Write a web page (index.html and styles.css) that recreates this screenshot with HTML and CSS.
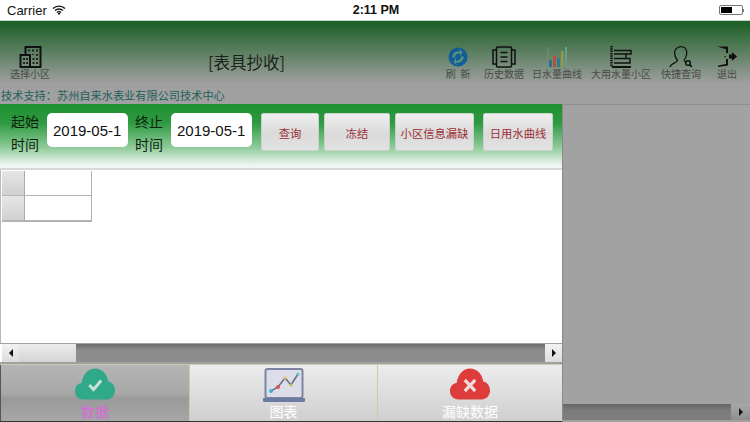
FILE: index.html
```html
<!DOCTYPE html>
<html lang="zh">
<head>
<meta charset="utf-8">
<title>表具抄收</title>
<link rel="stylesheet" href="styles.css">
</head>
<body>
<div class="status">
  <div class="st-left"><span>Carrier</span>
    <svg class="wifi" width="14" height="10" viewBox="0 0 14 10"><path d="M1 3.600a8.600 8.600 0 0 1 12 0M3 5.600a5.700 5.700 0 0 1 8 0M5 7.500a2.800 2.800 0 0 1 4 0" fill="none" stroke="#111" stroke-width="1.400"/><path d="M7 10 5.600 8.400a2 2 0 0 1 2.800 0z" fill="#111"/></svg>
  </div>
  <div class="st-time">2:11 PM</div>
  <div class="st-right"><div class="batt"><div class="batt-fill"></div></div><div class="batt-tip"></div></div>
</div>
<header class="header">
  <div class="hd-item hd-first">
    <svg class="ico" width="24" height="22" viewBox="0 0 24 22"><path d="M7.500 9V1h15v20H2.500V9H12v12" fill="none" stroke="#111" stroke-width="2"/><path d="M10 3.500h2v2h-2zM14 3.500h2v2h-2zM18 3.500h2v2h-2zM18 8h2v2h-2zM14 8l2 0v1h-2zM5 12h2v2H5zM8 12h2v2H8zM5 16h2v2H5zM8 16h2v2H8zM14.500 12h2v2h-2zM18 12h2v2h-2zM14.500 16h2v2h-2zM18 16h2v2h-2z" fill="#222"/></svg>
    <span>选择小区</span>
  </div>
  <div class="hd-title">[表具抄收]</div>
  <div class="hd-actions">
    <div class="hd-item a1">
      <svg class="ico" width="24" height="22" viewBox="0 0 24 22"><circle cx="12" cy="11" r="9.500" fill="#0f5f96"/><path d="M6.500 12a6 6 0 0 1 8-6.500l-1.500-3 3.500 3.500-2.500 4.500v-3a4 4 0 0 0-5 3.500zM17.500 10a6 6 0 0 1-8 6.500l1.500 3L7.500 16l2.500-4.500v3a4 4 0 0 0 5-3.500z" fill="#5f8f80"/></svg>
      <span>刷&nbsp;&nbsp;新</span>
    </div>
    <div class="hd-item a2">
      <svg class="ico" width="24" height="22" viewBox="0 0 24 22"><rect x="4.500" y="1" width="15" height="20" rx="1" fill="none" stroke="#111" stroke-width="1.500"/><path d="M4.500 4H1v14h3.500M19.500 4H23v14h-3.500M8.500 6.500h7M8.500 11h7M8.500 15.500h7" fill="none" stroke="#111" stroke-width="1.500"/></svg>
      <span>历史数据</span>
    </div>
    <div class="hd-item a3">
      <svg class="ico" width="24" height="22" viewBox="0 0 24 22"><path d="M3 1v20M3 21h19" stroke="#6f8f7f" stroke-width="1"/><rect x="4" y="14" width="3" height="7" fill="#2c6f92"/><rect x="8" y="10" width="3" height="11" fill="#b5513c"/><rect x="12" y="12" width="3" height="9" fill="#2f7a8f"/><rect x="16" y="5" width="2.500" height="16" fill="#8f9a4a"/><rect x="20" y="1" width="2" height="20" fill="#5f9f8f"/></svg>
      <span>日水量曲线</span>
    </div>
    <div class="hd-item a4">
      <svg class="ico" width="24" height="22" viewBox="0 0 24 22"><path d="M2.500 0v21" stroke="#111" stroke-width="2.400" stroke-dasharray="1.500 .8"/><path d="M3 21h19" stroke="#111" stroke-width="2"/><path d="M5 4.500h17V8H5M5 8h12v4.500H5M5 12.500h16V17H5" fill="none" stroke="#111" stroke-width="1.400"/></svg>
      <span>大用水量小区</span>
    </div>
    <div class="hd-item a5">
      <svg class="ico" width="24" height="22" viewBox="0 0 24 22"><path d="M1 21c1-4 6-3.500 7.500-6.500C6 11 5 7 6 4.500c1-3 5-4.500 8-3.500 3.500 1 4 5 3.500 8-.3 2-1 3.500-2.500 5" fill="none" stroke="#111" stroke-width="1.300"/><path d="M15 14.500c.5 1 1 1.500 2 2" fill="none" stroke="#111" stroke-width="1.300"/><circle cx="19" cy="17" r="2.300" fill="none" stroke="#111" stroke-width="1.500"/><path d="m20.800 18.800 2 2" stroke="#111" stroke-width="1.800"/></svg>
      <span>快捷查询</span>
    </div>
    <div class="hd-item a6">
      <svg class="ico" width="24" height="22" viewBox="0 0 24 22"><path d="M2 .5h11V7h-2V3.200zM11 13h2v6.500L3 21v-1.500l8-1.500z" fill="#111"/><rect x="9.500" y="10" width="1.200" height="1.500" fill="#111"/><path d="M14 8.500h3V6l5 4.500-5 4.500v-2.500h-3z" fill="#111"/></svg>
      <span>退出</span>
    </div>
  </div>
</header>
<div class="tech">技术支持：苏州自来水表业有限公司技术中心</div>
<div class="main">
  <div class="left">
    <div class="toolbar">
      <div class="lbl">起始<br>时间</div>
      <div class="field">2019-05-1</div>
      <div class="lbl">终止<br>时间</div>
      <div class="field field-last">2019-05-1</div>
      <div class="btn b1">查询</div>
      <div class="btn b2">冻结</div>
      <div class="btn b3">小区信息漏缺</div>
      <div class="btn b4">日用水曲线</div>
    </div>
    <div class="grid-area">
      <div class="tbl">
        <div class="th"></div><div class="td"></div>
        <div class="th"></div><div class="td"></div>
      </div>
    </div>
    <div class="hscroll">
      <div class="arrow"><i class="tri-l"></i></div>
      <div class="thumb"></div>
      <div class="track"></div>
      <div class="arrow"><i class="tri-r"></i></div>
    </div>
    <div class="tabs">
      <div class="tab tab-on">
        <svg width="40" height="32" viewBox="0 0 42 32" preserveAspectRatio="none"><path d="M9 31.500C3.500 31.500 0 27.500 0 23c0-4.500 3-7.500 7-8C8 6.500 14 .5 21 .5s12.500 5 14 13c4 .8 7 4.500 7 9 0 5-4 9-9 9z" fill="#2fa98a"/><path d="m15 17 4.500 4.500 8-9" fill="none" stroke="#cfe3dc" stroke-width="3"/></svg>
        <span class="tab-txt on">数据</span>
      </div>
      <div class="tab">
        <svg width="42" height="34" viewBox="0 0 42 34"><rect x="2.500" y="1" width="37" height="29" rx="2" fill="#dcdde8" stroke="#7b85a3" stroke-width="2"/><path d="M0 30h42v2.500a1.500 1.500 0 0 1-1.500 1.500h-39A1.500 1.500 0 0 1 0 32.500z" fill="#6e7ba0"/><path d="M8 23l7-4 7-9 6 7 7-11" fill="none" stroke="#6b6b80" stroke-width="1.500"/><circle cx="8" cy="23" r="2" fill="#3fb5c9"/><circle cx="15" cy="19" r="2" fill="#d9534f"/><circle cx="22" cy="10" r="1.500" fill="#e6c14f"/><circle cx="28" cy="17" r="1.500" fill="#b9c94f"/><circle cx="35" cy="6" r="1.500" fill="#4fc9b5"/></svg>
        <span class="tab-txt">图表</span>
      </div>
      <div class="tab tab-last">
        <svg width="40" height="32" viewBox="0 0 42 32" preserveAspectRatio="none"><path d="M9 31.500C3.500 31.500 0 27.500 0 23c0-4.500 3-7.500 7-8C8 6.500 14 .5 21 .5s12.500 5 14 13c4 .8 7 4.500 7 9 0 5-4 9-9 9z" fill="#dd3c3a"/><path d="m15.500 12 11 11m0-11-11 11" stroke="#f2dcdc" stroke-width="3.200"/></svg>
        <span class="tab-txt">漏缺数据</span>
      </div>
    </div>
  </div>
  <div class="right">
    <div class="right-body"></div>
    <div class="rscroll"><div class="rtrack"></div><div class="arrow"><i class="tri-r"></i></div></div>
  </div>
</div>
</body>
</html>
```

FILE: styles.css
```css
* { box-sizing: border-box; }
html, body { margin: 0; padding: 0; }
body {
  width: 750px; height: 422px; overflow: hidden; background: #a0a0a0;
  font-family: "Noto Sans CJK SC", "Liberation Sans", sans-serif;
}
.status {
  height: 21px; background: #fff; display: grid; grid-template-columns: 1fr auto 1fr;
  align-items: center; padding: 0 6px 0 7px; font-family: "Liberation Sans", sans-serif;
  font-size: 13px; color: #111; border-bottom: 1px solid #c8d8c8;
}
.st-left { display: flex; align-items: center; gap: 5px; }
.st-time { font-weight: 700; font-size: 12.500px; padding-left: 1px; }
.st-right { display: flex; justify-content: flex-end; align-items: center; }
.batt { width: 24px; height: 10px; border: 1px solid #777; border-radius: 2px; padding: 1px; }
.batt-fill { width: 11px; height: 100%; background: #000; }
.batt-tip { width: 1px; height: 3px; background: #777; }
.header {
  height: 63px; display: flex; align-items: flex-start; position: relative;
  background: linear-gradient(#1a5f24, #a0a0a0);
}
.hd-item {
  display: flex; flex-direction: column; align-items: center; font-size: 10px;
  line-height: 14px; color: #4a4a4a; white-space: nowrap; padding-top: 25px;
}
.ico { display: block; margin-bottom: -1px; flex: none; }
.hd-first { width: 60px; }
.hd-title { position: absolute; left: 208px; top: 31px; font-size: 16.500px; line-height: 20px; color: #1a241a; }
.hd-actions { margin-left: auto; display: flex; margin-right: 3px; }
.a1 { width: 46px; }
.a2 { width: 46px; }
.a3 { width: 60px; }
.a4 { width: 68px; }
.a5 { width: 52px; }
.a6 { width: 40px; }
.tech {
  height: 20px; background: #a0a0a0; font-size: 11.200px; line-height: 23px; padding-left: 1px;
  color: #1f5f5a; white-space: nowrap;
}
.main { height: 318px; display: flex; }
.left { width: 563px; flex: none; border-right: 1px solid #8a8a8a; display: flex; flex-direction: column; }
.toolbar {
  height: 66px; flex: none; display: flex; align-items: flex-start; padding: 9px 0 0 11px;
  background: linear-gradient(#1e8f2e 0%, #2f9a42 30%, #8fcb9a 68%, #f0f6f1 96%);
  border-bottom: 2px solid #d8d8d8;
}
.lbl { font-size: 14px; line-height: 23px; width: 28px; color: #0c1f0c; margin-top: -3px; }
.field {
  width: 81px; height: 34px; margin: 0 7px 0 8px; background: #fff; border-radius: 5px;
  font-family: "Liberation Sans", sans-serif; font-size: 15px; line-height: 36px;
  padding-left: 6px; color: #111; overflow: hidden; white-space: nowrap;
}
.field-last { margin-right: 9px; }
.btn {
  height: 38px; margin-right: 5px; background: linear-gradient(#efefef, #dadada 55%, #e2e2e2);
  border: 1px solid #c8d2c8; border-radius: 2px; font-size: 11.300px; line-height: 38px;
  text-align: center; color: #9c2f35; white-space: nowrap;
}
.b1 { width: 58px; }
.b2 { width: 66px; }
.b3 { width: 79px; margin-right: 9px; }
.b4 { width: 70px; margin-right: 0; }
.grid-area { height: 173px; background: #fff; padding: 1px 0 0 1px; flex: none; border-left: 1px solid #b8b8b8; }
.tbl { display: grid; grid-template-columns: 23px 66px; grid-auto-rows: 25px; width: 90px; border-right: 1px solid #b0b0b0; border-bottom: 1px solid #b0b0b0; }
.th { background: linear-gradient(#e6e6e6, #d0d0d0); border-right: 1px solid #aaa; border-bottom: 1px solid #b5b5b5; }
.td { background: #fff; border-bottom: 1px solid #b5b5b5; }
.hscroll { height: 18px; margin-top: 1px; display: flex; flex: none; background: #fff; padding-left: 2px; }
.arrow { width: 17px; flex: none; background: linear-gradient(#f2f2f2, #dcdcdc); display: flex; align-items: center; justify-content: center; }
.tri-l { border: 4px solid transparent; border-right: 4px solid #111; border-left: 0; }
.tri-r { border: 4px solid transparent; border-left: 4px solid #111; border-right: 0; }
.thumb { width: 57px; flex: none; background: linear-gradient(#ececec, #d4d4d4); }
.track { flex: 1; background: linear-gradient(#6e6e6e, #8c8c8c 35%, #8e8e8e); }
.tabs { height: 58px; margin-top: 2px; display: flex; flex: none; border-top: 1px solid #c5d0a8; border-bottom: 1px solid #333; }
.tab {
  flex: none; width: 188px; position: relative; display: flex; flex-direction: column; align-items: center; padding-top: 3px;
  background: linear-gradient(#ececec, #cfcfcf); border-right: 1px solid #c5d0a8; overflow: hidden;
}
.tab-on { width: 190px; background: linear-gradient(#b5b5b5, #a8a8a8 50%, #9a9a9a 60%, #a6a6a6); border-left: 1px solid #555; }
.tab-last { width: 184px; border-right: 0; }
.tab-txt { position: absolute; top: 36px; font-size: 14px; line-height: 20px; color: #fff; white-space: nowrap; }
.tab-txt.on { color: #d668d8; }
.right { flex: 1; display: flex; flex-direction: column; border-top: 1px solid #8f8f8f; }
.right-body { flex: 1; background: #a2a2a2; }
.rscroll { height: 16px; display: flex; margin-bottom: 2px; flex: none; }
.rtrack { flex: 1; background: linear-gradient(#666, #7c7c7c 40%, #7e7e7e); }
.rscroll .arrow { width: 19px; background: linear-gradient(#a8a8a8, #8e8e8e); }
```
